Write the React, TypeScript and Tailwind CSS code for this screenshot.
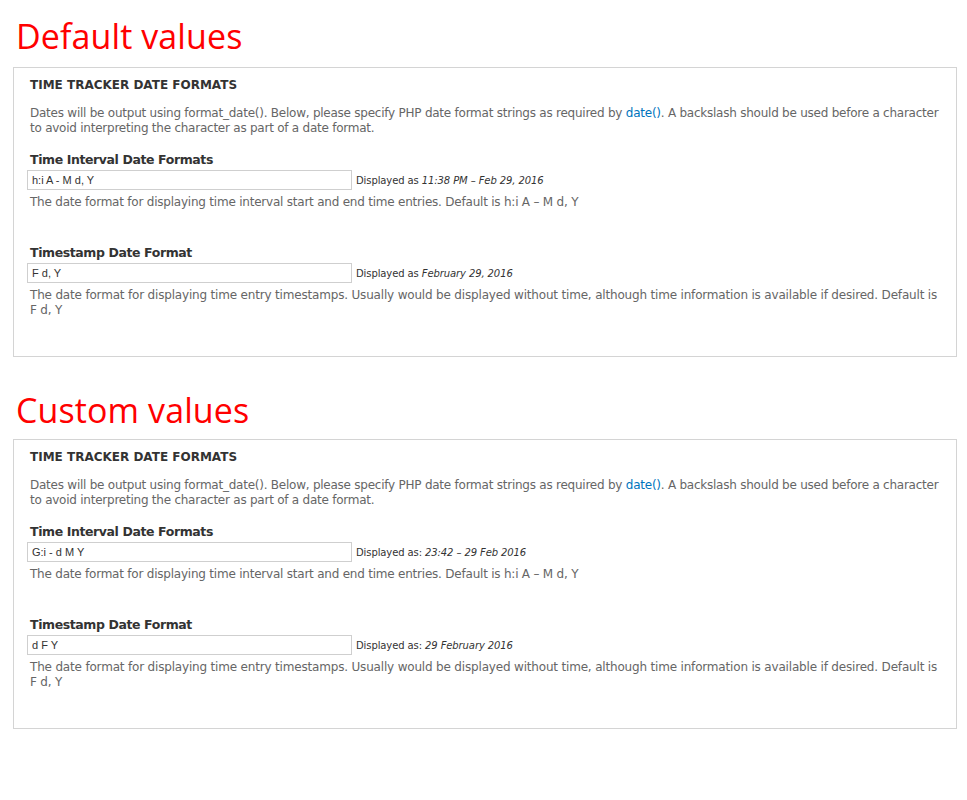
import React from "react";

type Cfg = {
  interval: string;
  intervalShown: string;
  stamp: string;
  stampShown: string;
  prefix: string;
};

const body = { fontFamily: '"DejaVu Sans", "Liberation Sans", sans-serif' };
const inputFont = { fontFamily: '"Liberation Sans", Arial, sans-serif' };

function Panel({ c }: { c: Cfg }) {
  return (
    <div className="ml-[13px] w-[944px] border border-[#d4d4d4] bg-white pl-[16px] pr-[12px] pt-[10px] pb-[38px]" style={body}>
      <div className="text-[12px] leading-[15px] font-bold text-[#333] uppercase">Time tracker date formats</div>
      <p className="mt-[13px] text-[12px] leading-[15px] text-[#666] tracking-[-0.24px]">
        Dates will be output using format_date(). Below, please specify PHP date format strings as required by{" "}
        <span className="text-[#0074bd]">date()</span>. A backslash should be used before a character to avoid interpreting the character as part of a date format.
      </p>
      <div className="mt-[16px] text-[12.5px] leading-[15px] font-bold text-[#333] tracking-[-0.4px]">Time Interval Date Formats</div>
      <div className="mt-[3px] flex items-center">
        <div className="-ml-[3px] flex h-[20px] w-[325px] items-center border border-[#cfcfcf] bg-white px-[4px] text-[11px] text-[#333]" style={inputFont}>
          {c.interval}
        </div>
        <span className="ml-[4px] text-[10px] text-[#333] tracking-[-0.1px]">
          {c.prefix} <i>{c.intervalShown}</i>
        </span>
      </div>
      <p className="mt-[5px] text-[12px] leading-[15px] text-[#666] tracking-[-0.22px]">
        The date format for displaying time interval start and end time entries. Default is h:i A – M d, Y
      </p>
      <div className="mt-[35px] text-[12.5px] leading-[15px] font-bold text-[#333] tracking-[-0.4px]">Timestamp Date Format</div>
      <div className="mt-[3px] flex items-center">
        <div className="-ml-[3px] flex h-[20px] w-[325px] items-center border border-[#cfcfcf] bg-white px-[4px] text-[11px] text-[#333]" style={inputFont}>
          {c.stamp}
        </div>
        <span className="ml-[4px] text-[10px] text-[#333] tracking-[-0.1px]">
          {c.prefix} <i>{c.stampShown}</i>
        </span>
      </div>
      <p className="mt-[5px] text-[12px] leading-[15px] text-[#666] tracking-[-0.18px]">
        The date format for displaying time entry timestamps. Usually would be displayed without time, although time information is available if desired. Default is F d, Y
      </p>
    </div>
  );
}

export default function App() {
  const heading = { fontFamily: '"Open Sans", "Noto Sans", sans-serif' };
  return (
    <div className="w-[967px] h-[800px] bg-white">
      <div className="h-[67px] pl-[16px] pt-[13px]">
        <div className="text-[34px] leading-[46px] text-[#ff0000] tracking-[0.1px]" style={heading}>Default values</div>
      </div>
      <Panel
        c={{
          interval: "h:i A - M d, Y",
          intervalShown: "11:38 PM – Feb 29, 2016",
          stamp: "F d, Y",
          stampShown: "February 29, 2016",
          prefix: "Displayed as",
        }}
      />
      <div className="h-[82px] pl-[16px] pt-[30px]">
        <div className="text-[34px] leading-[46px] text-[#ff0000] tracking-[0.1px]" style={heading}>Custom values</div>
      </div>
      <Panel
        c={{
          interval: "G:i - d M Y",
          intervalShown: "23:42 – 29 Feb 2016",
          stamp: "d F Y",
          stampShown: "29 February 2016",
          prefix: "Displayed as:",
        }}
      />
    </div>
  );
}
